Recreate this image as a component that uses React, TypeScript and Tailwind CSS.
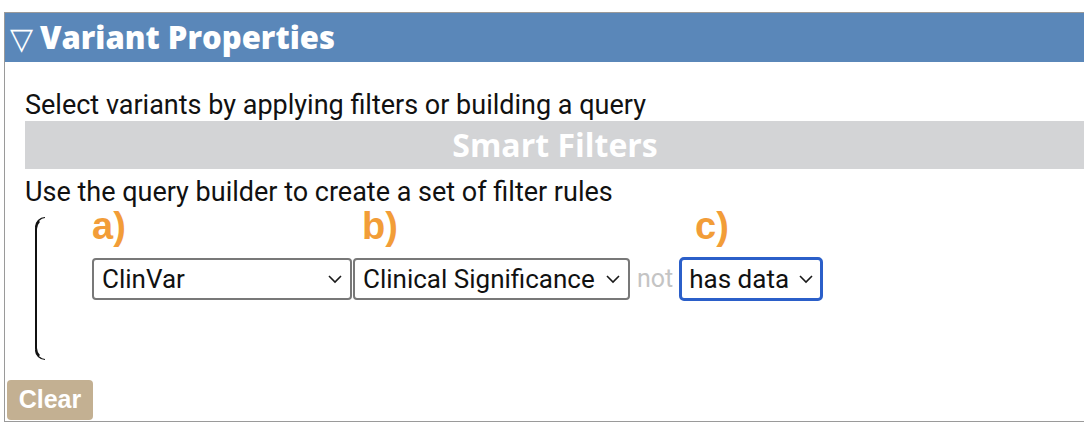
import React from 'react';

function Chevron() {
  return (
    <svg width="16" height="10" viewBox="0 0 16 10" className="shrink-0">
      <path d="M2 2 L8 8 L14 2" fill="none" stroke="#1a1a1a" strokeWidth="1.6" />
    </svg>
  );
}

interface FakeSelectProps {
  value: string;
  width: string;
  focused?: boolean;
}

function FakeSelect({ value, width, focused }: FakeSelectProps) {
  return (
    <div
      className={
        focused
          ? `flex items-center justify-between h-[44px] ${width} rounded-[5px] border-[3px] border-[#2b5fc9] pl-[7px] pr-[6px]`
          : `flex items-center justify-between h-[42px] ${width} rounded-[4px] border-2 border-[#787878] pl-[8px] pr-[7px]`
      }
    >
      <span className="text-[26px] leading-none text-[#111]">{value}</span>
      <Chevron />
    </div>
  );
}

export default function App() {
  return (
    <div
      className="relative w-full h-[428px] bg-white overflow-hidden pt-[12px] pl-[4px]"
      style={{ fontFamily: 'Roboto, "Noto Sans", sans-serif' }}
    >
      <div className="w-[1100px] h-[410px] border border-[#9a9a9a] flex flex-col">
        {/* Header */}
        <div
          className="h-[49px] bg-[#5a87b9] text-white flex items-center pl-[5px] text-[31px] font-extrabold"
          style={{ fontFamily: '"Open Sans", sans-serif' }}
        >
          <span className="mr-[7px] text-[30px] font-normal">▽</span>
          <span>Variant Properties</span>
        </div>

        {/* Body */}
        <div className="flex flex-col pl-[20px] pt-[27px] flex-1">
          <p className="text-[27px] leading-[32px] text-[#111]">
            Select variants by applying filters or building a query
          </p>
          <div
            className="h-[48px] w-[1060px] bg-[#d3d4d6] text-white font-bold text-[32px] flex items-center justify-center"
            style={{ fontFamily: '"Open Sans", sans-serif' }}
          >
            Smart Filters
          </div>
          <p className="mt-[7px] text-[27px] leading-[32px] text-[#111]">
            Use the query builder to create a set of filter rules
          </p>

          {/* Rule group */}
          <div className="relative mt-[9px] ml-[10px] h-[143px] w-[900px]">
            <div className="absolute left-0 top-0 bottom-0 w-[12px] border-l-2 border-y-2 border-y-transparent border-[#111] rounded-l-[12px]" />
            <div className="absolute left-0 top-0 w-[10px] h-[10px] border-t-[1.5px] border-l-2 border-[#111] rounded-tl-[10px]" />
            <div className="absolute left-0 bottom-0 w-[10px] h-[10px] border-b-[1.5px] border-l-2 border-[#111] rounded-bl-[10px]" />

            <div className="relative -mt-[11px] ml-[57px] flex flex-col">
              <div
                className="flex text-[#f29d38] font-bold text-[38px] leading-[40px] h-[51px] items-start"
                style={{ fontFamily: '"Liberation Sans", Arial, sans-serif' }}
              >
                <span className="w-[270px]">a)</span>
                <span className="w-[333px]">b)</span>
                <span>c)</span>
              </div>
              <div className="flex items-center">
                <FakeSelect value="ClinVar" width="w-[260px]" />
                <div className="w-[1px]" />
                <FakeSelect value="Clinical Significance" width="w-[277px]" />
                <span className="text-[25px] text-[#c4c4c4] ml-[7px] mr-[6px]">not</span>
                <FakeSelect value="has data" width="w-[144px]" focused />
              </div>
            </div>
          </div>
        </div>
      </div>
      <button
        className="absolute left-[7px] top-[380px] w-[86px] h-[40px] rounded-[4px] bg-[#c3b092] text-white font-bold text-[25px]"
        style={{ fontFamily: '"Liberation Sans", Arial, sans-serif' }}
      >
        Clear
      </button>
    </div>
  );
}
